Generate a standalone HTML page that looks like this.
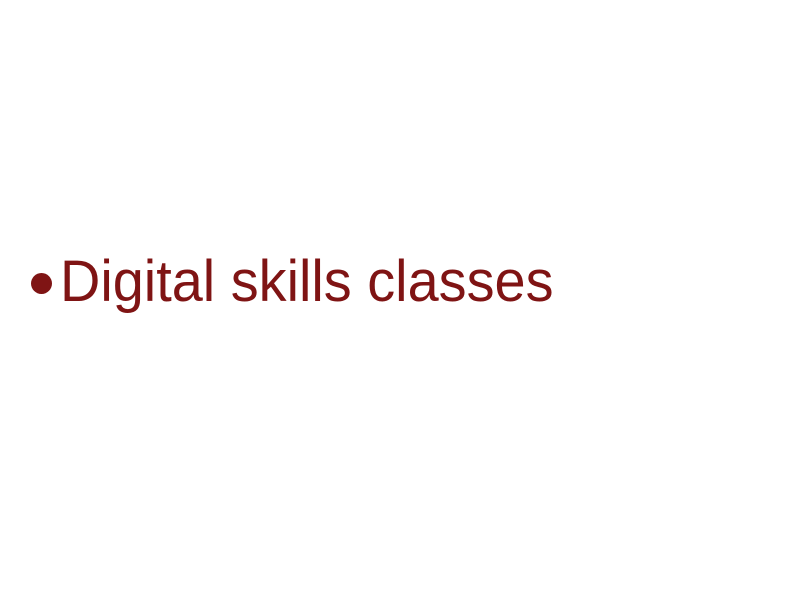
<!DOCTYPE html>
<html><head><style>
html,body{margin:0;padding:0;background:#fff;width:800px;height:600px;overflow:hidden}
.b{position:absolute;left:31px;top:273px;width:21px;height:21px;border-radius:50%;background:#7f1414}
.t{position:absolute;left:60px;top:247px;font-family:"Liberation Sans",sans-serif;font-size:58px;line-height:70px;color:#7f1414;white-space:nowrap;transform:scaleX(0.963);transform-origin:0 0}
</style></head><body>
<div class="b"></div>
<div class="t">Digital skills classes</div>
</body></html>
